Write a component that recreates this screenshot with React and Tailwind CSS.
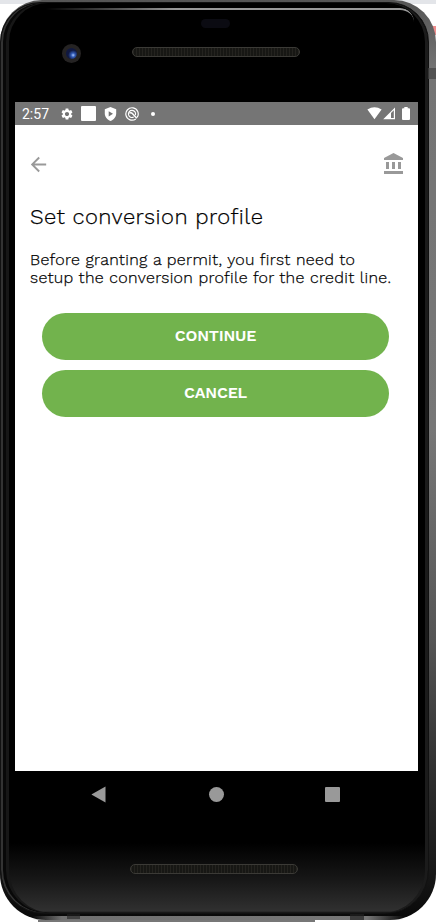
import React from "react";
import { MdSettings, MdArrowBack } from "react-icons/md";

function Speaker({ className }) {
  return (
    <div
      className={`h-[10px] w-[168px] rounded-full border border-[#3b3a36] bg-[#11110f] bg-[repeating-linear-gradient(90deg,#24231f_0px,#24231f_1px,#171714_1px,#171714_3px)] ${className}`}
    />
  );
}

function BankIcon() {
  return (
    <svg className="size-[24px]" viewBox="0 0 24 24" fill="currentColor">
      <path d="M4 10v7h3v-7H4zm6 0v7h3v-7h-3zM2 22h19v-3H2v3zm14-12v7h3v-7h-3zM11.500 1L2 6v2h19V6l-9.500-5z" />
    </svg>
  );
}

function StatusBar() {
  return (
    <div className="flex h-[23px] items-center bg-[#757575] pl-[7px] pr-[8px] text-white">
      <span className="w-[38px] whitespace-nowrap pt-[1px] font-[Roboto,sans-serif] text-[14px] leading-[22px]">2:57</span>
      <MdSettings className="size-[14px]" />
      <span className="ml-[7px] size-[15px] rounded-[1px] bg-white" />
      <svg className="ml-[8px] h-[14px] w-[13px]" viewBox="0 0 13 14">
        <path fill="#fff" d="M6.5 0 12.2 2.2V6.5C12.2 10 9.8 12.8 6.5 14 3.2 12.8.8 10 .8 6.5V2.2Z" />
        <path fill="#757575" d="M4.7 4.2 9 6.8 4.7 9.4Z" />
      </svg>
      <svg className="ml-[8px] size-[14px]" viewBox="0 0 14 14" fill="none" stroke="#fff">
        <path strokeWidth="1.2" d="M10.8 11.9A6.2 6.2 0 1 1 12.2 10.4" />
        <path strokeWidth="1.1" d="M8.7 10.1A3.6 3.6 0 1 1 10.4 8.1" />
        <path strokeWidth="1.4" d="M4.2 6.1Q6.3 5 7.6 6.8L11.8 11.2" />
      </svg>
      <span className="ml-[12px] size-[4px] rounded-full bg-white" />
      <svg className="ml-auto h-[13px] w-[15px]" viewBox="0 0 15 13">
        <path fill="#fff" d="M.4 2.4Q7.5-1.9 14.600 2.4L7.5 12.200Z" />
      </svg>
      <svg className="ml-[1px] h-[13px] w-[13px]" viewBox="0 0 13 13">
        <path fill="#fff" fillRule="evenodd" d="M12 .5V12.3H.2ZM8 6V11H10.8V3.2Z" />
      </svg>
      <svg className="ml-[6px] h-[13px] w-[8px]" viewBox="0 0 8 13">
        <path fill="#fff" d="M2.3 0H5.7V1.3H7Q8 1.3 8 2.3V12Q8 13 7 13H1Q0 13 0 12V2.3Q0 1.3 1 1.3H2.3Z" />
      </svg>
    </div>
  );
}

function PillButton({ children }) {
  return (
    <button className="flex h-[47px] w-full items-center justify-center rounded-full bg-[#72b34d] pb-[2px] text-[16px] font-semibold tracking-[-0.2px] text-white">
      <span className="whitespace-nowrap">{children}</span>
    </button>
  );
}

function Screen() {
  return (
    <main className="flex h-[669px] w-[403px] flex-col bg-white font-['Work_Sans',Inter,sans-serif] text-black">
      <StatusBar />
      <header className="flex h-[78px] items-center justify-between px-[12px] text-[#999]">
        <MdArrowBack className="size-[23px]" />
        <BankIcon />
      </header>
      <section className="pl-[15px] [-webkit-text-stroke:0.25px_#000]">
        <h1 className="h-[27px] whitespace-nowrap text-[22px] font-light leading-[27px] tracking-[0.45px]">
          Set conversion profile
        </h1>
        <p className="mt-[21px] whitespace-nowrap text-[16px] font-light leading-[18px] tracking-[0.31px]">
          <span className="block">Before granting a permit, you first need to</span>
          <span className="block">setup the conversion profile for the credit line.</span>
        </p>
      </section>
      <div className="mt-[26px] flex flex-col gap-[10px] pl-[27px] pr-[29px]">
        <PillButton>CONTINUE</PillButton>
        <PillButton>CANCEL</PillButton>
      </div>
    </main>
  );
}

export default function App() {
  return (
    <div className="relative h-[922px] w-[436px] overflow-hidden bg-[linear-gradient(180deg,#e3e5e9_0px,#e3e5e9_4px,#fff_4px)]">
      <div className="absolute right-0 top-[26px] h-[9px] w-[5px] bg-[#ee8d8d]" />
      <div className="relative h-[920px] rounded-t-[42px] rounded-b-[46px] bg-[linear-gradient(180deg,#555_0px,#747474_70px,#777_430px,#555_640px,#303030_770px,#181818_870px,#080808_920px)] pt-[2px]">
        <div className="relative flex h-[912px] w-[429px] flex-col overflow-hidden rounded-t-[40px] rounded-b-[44px] border border-[#111] bg-[linear-gradient(180deg,#000_0px,#000_840px,#161616_875px,#303030_908px,#000_911px)] pl-[14px] shadow-[inset_2px_0_0_#333,inset_5px_0_0_#080808,inset_8px_0_0_#171717,inset_-3px_0_0_#1b1b1b]">
          <div className="absolute left-[45px] top-[5px] h-[14px] w-[368px] rounded-tr-[36px] border-t-2 border-[#999] [mask-image:linear-gradient(90deg,transparent,#000_35%)]" />
          <div className="flex h-[99px] shrink-0 flex-col">
            <div className="ml-[186px] mt-[16px] h-[9px] w-[29px] rounded-full bg-[#0b0b12]" />
            <div className="mt-[16px] flex items-center">
              <div className="ml-[47px] grid size-[19px] place-items-center rounded-full bg-[#252323]">
                <div className="size-[11px] rounded-full bg-[radial-gradient(circle_at_65%_65%,#a8c8ff_0px,#3159b4_2px,#10183f_5px)]" />
              </div>
              <Speaker className="-mt-[4px] ml-[51px]" />
            </div>
          </div>
          <Screen />
          <nav className="flex h-[46px] w-[403px] items-center text-[#999]">
            <svg className="ml-[76px] h-[17px] w-[15px]" viewBox="0 0 15 17">
              <path fill="currentColor" d="M14.500 .5V16.500L.8 8.8Q.3 8.5.8 8.2Z" />
            </svg>
            <span className="ml-[103px] size-[15px] rounded-full bg-[#999]" />
            <span className="ml-[101px] size-[15px] rounded-[1px] bg-[#999]" />
          </nav>
          <Speaker className="ml-[115px] mt-[47px]" />
        </div>
      </div>
      <div className="absolute bottom-[2px] left-[32px] h-[4px] w-[372px] bg-[linear-gradient(90deg,transparent,#707070_8%,#777_90%,transparent)]" />
      <div className="absolute bottom-0 left-[38px] h-[2px] w-[277px] bg-[#777]" />
      <div className="absolute bottom-[3px] left-[67px] h-[5px] w-[13px] bg-[#222]/60" />
      <div className="absolute bottom-[2px] left-[350px] h-[6px] w-[14px] bg-[#222]/70" />
      <div className="absolute right-0 top-[68px] h-[11px] w-[8px] bg-[#444]/70" />
    </div>
  );
}
